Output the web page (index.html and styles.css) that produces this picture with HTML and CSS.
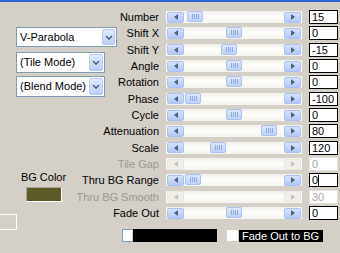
FILE: index.html
```html
<!DOCTYPE html>
<html lang="en">
<head>
  <meta charset="UTF-8">
  <title>Parabola Settings</title>
  <link rel="stylesheet" href="styles.css">
</head>
<body>
  <div class="titlebar"></div>
  <div class="panel">
    <div class="side">
      <div class="combo combo-wide"><span>V-Parabola</span><i class="drop"><svg viewBox="0 0 8 5"><path d="M1 1l3 3 3-3" /></svg></i></div>
      <div class="combo combo-mode"><span>(Tile Mode)</span><i class="drop"><svg viewBox="0 0 8 5"><path d="M1 1l3 3 3-3" /></svg></i></div>
      <div class="combo combo-mode combo-blend"><span>(Blend Mode)</span><i class="drop"><svg viewBox="0 0 8 5"><path d="M1 1l3 3 3-3" /></svg></i></div>
      <div class="bg-color">
        <div class="bg-label">BG Color</div>
        <div class="swatch"></div>
      </div>
      <div class="edge-box"></div>
    </div>

    <div class="rows">
      <div class="row">
        <label>Number</label>
        <div class="slider"><i class="btn left"></i><div class="track"><i class="thumb" style="left: 3px"></i></div><i class="btn right"></i></div>
        <div class="value">15</div>
      </div>
      <div class="row">
        <label>Shift X</label>
        <div class="slider"><i class="btn left"></i><div class="track"><i class="thumb" style="left: 42px"></i></div><i class="btn right"></i></div>
        <div class="value">0</div>
      </div>
      <div class="row">
        <label>Shift Y</label>
        <div class="slider"><i class="btn left"></i><div class="track"><i class="thumb" style="left: 37px"></i></div><i class="btn right"></i></div>
        <div class="value">-15</div>
      </div>
      <div class="row">
        <label>Angle</label>
        <div class="slider"><i class="btn left"></i><div class="track"><i class="thumb" style="left: 42px"></i></div><i class="btn right"></i></div>
        <div class="value">0</div>
      </div>
      <div class="row">
        <label>Rotation</label>
        <div class="slider"><i class="btn left"></i><div class="track"><i class="thumb" style="left: 42px"></i></div><i class="btn right"></i></div>
        <div class="value">0</div>
      </div>
      <div class="row">
        <label>Phase</label>
        <div class="slider"><i class="btn left"></i><div class="track"><i class="thumb" style="left: 1px"></i></div><i class="btn right"></i></div>
        <div class="value">-100</div>
      </div>
      <div class="row">
        <label>Cycle</label>
        <div class="slider"><i class="btn left"></i><div class="track"><i class="thumb" style="left: 42px"></i></div><i class="btn right"></i></div>
        <div class="value">0</div>
      </div>
      <div class="row">
        <label>Attenuation</label>
        <div class="slider"><i class="btn left"></i><div class="track"><i class="thumb" style="left: 77px"></i></div><i class="btn right"></i></div>
        <div class="value">80</div>
      </div>
      <div class="row">
        <label>Scale</label>
        <div class="slider"><i class="btn left"></i><div class="track"><i class="thumb" style="left: 26px"></i></div><i class="btn right"></i></div>
        <div class="value">120</div>
      </div>
      <div class="row disabled">
        <label>Tile Gap</label>
        <div class="slider"><i class="btn left"></i><div class="track"></div><i class="btn right"></i></div>
        <div class="value">0</div>
      </div>
      <div class="row">
        <label>Thru BG Range</label>
        <div class="slider"><i class="btn left"></i><div class="track"><i class="thumb" style="left: 1px"></i></div><i class="btn right"></i></div>
        <div class="value">0<span class="caret"></span></div>
      </div>
      <div class="row disabled">
        <label>Thru BG Smooth</label>
        <div class="slider"><i class="btn left"></i><div class="track"></div><i class="btn right"></i></div>
        <div class="value">30</div>
      </div>
      <div class="row">
        <label>Fade Out</label>
        <div class="slider"><i class="btn left"></i><div class="track"><i class="thumb" style="left: 42px"></i></div><i class="btn right"></i></div>
        <div class="value">0</div>
      </div>

      <div class="footer">
        <div class="gradient-bar"><span class="gradient-stop"></span></div>
        <label class="check"><span class="box"></span><span class="check-text">Fade Out to BG</span></label>
      </div>
    </div>
  </div>
</body>
</html>
```

FILE: styles.css
```css
body {
  margin: 0;
  width: 340px;
  height: 253px;
  overflow: hidden;
  background: #d4d0c8;
  font-family: "Liberation Sans", Arial, sans-serif;
  font-size: 11px;
  color: #000;
}

.titlebar {
  height: 2px;
  background: #2f62d5;
}

/* side controls and slider rows share one cell */
.panel {
  display: grid;
}
.side,
.rows {
  grid-area: 1 / 1;
}

.side {
  display: flex;
  flex-direction: column;
  align-items: flex-start;
}

.combo {
  display: flex;
  align-items: stretch;
  box-sizing: border-box;
  margin-left: 16px;
  background: #fff;
  border: 1px solid #7f9db9;
}
.combo span {
  flex: 1;
  padding-left: 3px;
  line-height: 18px;
  white-space: nowrap;
}
.combo-wide {
  margin-top: 25px;
  width: 101px;
  height: 20px;
}
.combo-mode {
  margin-top: 5px;
  width: 89px;
  height: 21px;
}
.combo-mode span {
  line-height: 19px;
}
.combo-blend {
  margin-top: 3px;
}

.drop {
  width: 13px;
  margin: 1px;
  display: flex;
  align-items: center;
  justify-content: center;
  box-sizing: border-box;
  border: 1px solid #b4c8f2;
  border-radius: 2px;
  background: linear-gradient(#e3ebfd, #bccffa);
}
.combo-mode .drop {
  width: 14px;
}
.drop svg {
  width: 8px;
  height: 5px;
  fill: none;
  stroke: #4d6185;
  stroke-width: 1.6;
}

.bg-color {
  margin: 74px 0 0 23px;
  width: 41px;
  display: flex;
  flex-direction: column;
  align-items: center;
}
.bg-label {
  line-height: 13px;
  white-space: nowrap;
}
.swatch {
  margin-top: 3px;
  width: 36px;
  height: 15px;
  box-sizing: border-box;
  background: #5c5a27;
  border: 1px solid #fff;
  border-top-color: #a9a59c;
  border-left-color: #a9a59c;
}

.edge-box {
  margin-top: 12px;
  width: 17px;
  height: 16px;
  box-sizing: border-box;
  border: 1px solid #fff;
  border-left: 0;
}

.rows {
  padding-top: 7px;
  display: flex;
  flex-direction: column;
}

.row {
  display: flex;
  align-items: center;
  gap: 7px;
  height: 16.33px;
}
.row label {
  width: 159px;
  text-align: right;
  white-space: nowrap;
}

.slider {
  width: 136px;
  height: 12px;
  box-sizing: border-box;
  padding: 0 1px;
  display: flex;
  align-items: center;
  background: linear-gradient(#f1f0ea, #fdfdfb 45%, #f4f3ee);
}
.track {
  flex: 1;
  align-self: stretch;
  position: relative;
}

.btn {
  width: 17px;
  height: 11px;
  box-sizing: border-box;
  border: 1px solid #a9c1f3;
  border-radius: 2px;
  background: linear-gradient(#d6e2fd, #b2c8f8);
  display: flex;
  align-items: center;
  justify-content: center;
}
.btn::before {
  content: "";
  border-top: 3.5px solid transparent;
  border-bottom: 3.5px solid transparent;
}
.btn.left::before {
  border-right: 4px solid #4d6185;
}
.btn.right::before {
  border-left: 4px solid #4d6185;
}

.thumb {
  position: absolute;
  top: 0;
  width: 16px;
  height: 11px;
  box-sizing: border-box;
  border: 1px solid #a9c0f0;
  border-radius: 2px;
  background:
    linear-gradient(90deg, transparent 4px, #8ea6e2 4px, #8ea6e2 5px, transparent 5px, transparent 6px, #8ea6e2 6px, #8ea6e2 7px, transparent 7px, transparent 8px, #8ea6e2 8px, #8ea6e2 9px, transparent 9px, transparent 10px, #8ea6e2 10px, #8ea6e2 11px, transparent 11px) center / 100% 5px no-repeat,
    linear-gradient(#dde7fe, #bfd1fa);
}

.value {
  width: 29px;
  height: 14px;
  box-sizing: border-box;
  background: #fff;
  border: 1px solid #000;
  padding-left: 2px;
  line-height: 12px;
  display: flex;
  align-items: center;
}
.caret {
  width: 1px;
  height: 11px;
  margin-left: 0;
  background: #000;
}

.disabled label {
  color: #9a9890;
}
.disabled .value {
  color: #aaa8a0;
  border-color: #e4e2da;
}
.disabled .btn {
  border-color: #e8e7e0;
  background: #f0efe9;
}
.disabled .btn.left::before {
  border-right-color: #c4c2ba;
}
.disabled .btn.right::before {
  border-left-color: #c4c2ba;
}

.footer {
  margin: 8px 0 0 122px;
  display: flex;
  align-items: center;
  height: 13px;
}
.gradient-bar {
  width: 95px;
  height: 13px;
  background: #000;
  display: flex;
}
.gradient-stop {
  width: 11px;
  height: 13px;
  box-sizing: border-box;
  background: #fff;
  border: 1px solid #7f9db9;
  border-right-color: #ccc;
}
.check {
  margin-left: 10px;
  display: flex;
  align-items: center;
}
.check .box {
  width: 11px;
  height: 11px;
  background: #fff;
}
.check-text {
  margin-left: 1px;
  padding: 0 4px 0 3px;
  height: 12px;
  line-height: 12px;
  background: #000;
  color: #fff;
}
```
